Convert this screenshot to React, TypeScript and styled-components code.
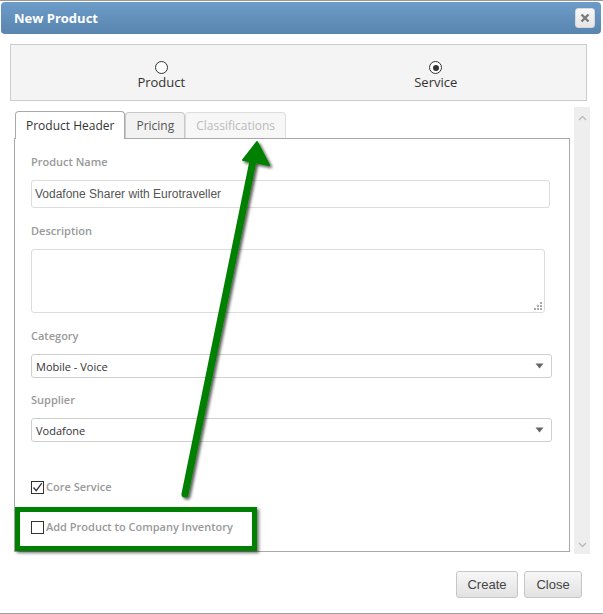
import React from 'react'
import styled, { createGlobalStyle } from 'styled-components'

const GlobalStyle = createGlobalStyle`
  html, body {
    margin: 0;
    padding: 0;
    background: #fff;
  }
  body {
    font-family: 'Open Sans', 'Liberation Sans', sans-serif;
  }
`

const Page = styled.div`
  position: relative;
  width: 603px;
  height: 614px;
  border-top: 1px solid #9a9a9a;
  box-sizing: border-box;
  overflow: hidden;
`

const Header = styled.div`
  margin: 1px 2px 0 1px;
  height: 32px;
  border-radius: 4px;
  background: linear-gradient(#6c9cc8, #5985b0);
  display: flex;
  align-items: center;
  justify-content: space-between;
  padding: 0 6px 0 13px;
`

const Title = styled.span`
  color: #fff;
  font-weight: 700;
  font-size: 13px;
`

const CloseX = styled.div`
  width: 18px;
  height: 18px;
  border: 1px solid #d8d8d8;
  border-radius: 3px;
  background: linear-gradient(#f8f8f8, #e6e6e6);
  display: flex;
  align-items: center;
  justify-content: center;
`

const RadioPanel = styled.div`
  margin: 10px 16px 0 10px;
  height: 55px;
  border: 1px solid #cccccc;
  background: #f4f4f4;
  padding: 0 13px;
  display: grid;
  grid-template-columns: 1fr 1fr;
`

const RadioOption = styled.div`
  display: flex;
  flex-direction: column;
  align-items: center;
  padding-top: 16px;
  font-size: 13px;
  color: #333;
  line-height: 16px;
`

const Radio = styled.span<{ $on?: boolean }>`
  width: 11px;
  height: 11px;
  border: 1px solid #333;
  border-radius: 50%;
  background: #fff;
  position: relative;
  &::after {
    content: '';
    display: ${(p) => (p.$on ? 'block' : 'none')};
    position: absolute;
    left: 2.5px;
    top: 2.5px;
    width: 6px;
    height: 6px;
    border-radius: 50%;
    background: #333;
  }
`

const ScrollArea = styled.div`
  margin: 6px 13px 0 14px;
  height: 447px;
  display: flex;
  gap: 4px;
`

const Content = styled.div`
  flex: 1;
  padding-top: 3px;
  display: flex;
  flex-direction: column;
`

const Scrollbar = styled.div`
  width: 16px;
  background: #eeeeee;
  display: flex;
  flex-direction: column;
  justify-content: space-between;
  align-items: center;
  padding: 8px 0 6px;
`

const Tabs = styled.div`
  display: flex;
  align-items: flex-end;
  height: 28px;
  padding-left: 1px;
`

const Tab = styled.div<{ $kind: 'active' | 'normal' | 'disabled' }>`
  height: ${(p) => (p.$kind === 'active' ? '28px' : '26px')};
  box-sizing: border-box;
  padding: 0 10px;
  display: flex;
  align-items: center;
  font-size: 12px;
  border: 1px solid ${(p) => (p.$kind === 'active' ? '#a8a8a8' : p.$kind === 'normal' ? '#c8c8c8' : '#dddddd')};
  border-bottom: none;
  border-radius: 4px 4px 0 0;
  background: ${(p) => (p.$kind === 'active' ? '#fff' : p.$kind === 'normal' ? '#f2f2f2' : '#f7f7f7')};
  color: ${(p) => (p.$kind === 'active' ? '#333' : p.$kind === 'normal' ? '#555' : '#bbbbbb')};
  margin-bottom: ${(p) => (p.$kind === 'active' ? '-1px' : '0')};
  position: relative;
  z-index: ${(p) => (p.$kind === 'active' ? 1 : 0)};
`

const Panel = styled.div`
  height: 414px;
  box-sizing: border-box;
  border: 1px solid #a8a8a8;
  padding: 15px 0 0 16px;
  display: flex;
  flex-direction: column;
  align-items: flex-start;
`

const Label = styled.div<{ $gap: number }>`
  margin-top: ${(p) => p.$gap}px;
  font-size: 11px;
  font-weight: 600;
  color: #999999;
  line-height: 16px;
`

const TextBox = styled.div`
  margin-top: 10px;
  width: 519px;
  height: 28px;
  box-sizing: border-box;
  border: 1px solid #dcdcdc;
  border-radius: 3px;
  padding-left: 3px;
  display: flex;
  align-items: center;
  font-family: 'Liberation Sans', Arial, sans-serif;
  font-size: 12px;
  color: #555;
`

const TextArea = styled.div`
  position: relative;
  margin-top: 10px;
  width: 514px;
  height: 64px;
  box-sizing: border-box;
  border: 1px solid #dcdcdc;
  border-radius: 3px;
`

const Grip = styled.svg`
  position: absolute;
  right: 2px;
  bottom: 2px;
`

const Select = styled.div`
  margin-top: 10px;
  width: 521px;
  height: 24px;
  box-sizing: border-box;
  border: 1px solid #cfcfcf;
  border-radius: 3px;
  padding: 0 7px 0 4px;
  display: flex;
  align-items: center;
  justify-content: space-between;
  font-size: 11px;
  color: #333;
`

const CheckRow = styled.div<{ $gap: number }>`
  margin-top: ${(p) => p.$gap}px;
  display: flex;
  align-items: center;
  gap: 2px;
  font-size: 11px;
  font-weight: 600;
  color: #999999;
  line-height: 16px;
`

const Box = styled.span`
  width: 13px;
  height: 13px;
  box-sizing: border-box;
  border: 1px solid #333;
  background: #fff;
  display: flex;
  align-items: center;
  justify-content: center;
`

const Footer = styled.div`
  display: flex;
  justify-content: flex-end;
  gap: 6px;
  padding: 17px 21px 0 0;
`

const Button = styled.button<{ $w: number }>`
  width: ${(p) => p.$w}px;
  height: 27px;
  border: 1px solid #c6c6c6;
  border-radius: 3px;
  background: linear-gradient(#f7f7f7, #e2e2e2);
  font-family: 'Liberation Sans', Arial, sans-serif;
  font-size: 13px;
  color: #444;
  padding: 0;
`

const BottomLine = styled.div`
  position: absolute;
  left: 0;
  right: 0;
  bottom: 0;
  height: 1px;
  background: #a0a0a0;
`

const Highlight = styled.div`
  position: absolute;
  left: 15px;
  top: 506px;
  width: 242px;
  height: 44px;
  box-sizing: border-box;
  border: 5px solid #008000;
  box-shadow: 2px 2px 3px rgba(0, 0, 0, 0.55);
`

const Annotation = styled.svg`
  position: absolute;
  left: 0;
  top: 0;
  pointer-events: none;
`

function Arrow() {
  return (
    <svg width="9" height="6" viewBox="0 0 9 6">
      <path d="M0.5 0.5 L8.5 0.5 L4.5 5.5 Z" fill="#666" />
    </svg>
  )
}

function Check() {
  return (
    <svg width="11" height="11" viewBox="0 0 11 11">
      <path d="M1.5 5.5 L4.2 8.6 L9.8 1.2" fill="none" stroke="#333" strokeWidth="1.3" />
    </svg>
  )
}

export default function App() {
  return (
    <Page>
      <GlobalStyle />
      <Header>
        <Title>New Product</Title>
        <CloseX>
          <svg width="10" height="10" viewBox="0 0 10 10">
            <path d="M1.5 1.5 L8.5 8.5 M8.5 1.5 L1.5 8.5" stroke="#7a7a7a" strokeWidth="2.4" />
          </svg>
        </CloseX>
      </Header>

      <RadioPanel>
        <RadioOption>
          <Radio />
          Product
        </RadioOption>
        <RadioOption>
          <Radio $on />
          Service
        </RadioOption>
      </RadioPanel>

      <ScrollArea>
        <Content>
          <Tabs>
            <Tab $kind="active">Product Header</Tab>
            <Tab $kind="normal">Pricing</Tab>
            <Tab $kind="disabled">Classifications</Tab>
          </Tabs>
          <Panel>
            <Label $gap={0}>Product Name</Label>
            <TextBox>Vodafone Sharer with Eurotraveller</TextBox>
            <Label $gap={15}>Description</Label>
            <TextArea>
              <Grip width="8" height="8" viewBox="0 0 8 8">
                <rect x="6" y="0" width="2" height="2" fill="#aaa" />
                <rect x="3" y="3" width="2" height="2" fill="#aaa" />
                <rect x="6" y="3" width="2" height="2" fill="#aaa" />
                <rect x="0" y="6" width="2" height="2" fill="#aaa" />
                <rect x="3" y="6" width="2" height="2" fill="#aaa" />
                <rect x="6" y="6" width="2" height="2" fill="#aaa" />
              </Grip>
            </TextArea>
            <Label $gap={15}>Category</Label>
            <Select>
              Mobile - Voice
              <Arrow />
            </Select>
            <Label $gap={14}>Supplier</Label>
            <Select>
              Vodafone
              <Arrow />
            </Select>
            <CheckRow $gap={37}>
              <Box>
                <Check />
              </Box>
              Core Service
            </CheckRow>
            <CheckRow $gap={24}>
              <Box />
              Add Product to Company Inventory
            </CheckRow>
          </Panel>
        </Content>
        <Scrollbar>
          <svg width="9" height="6" viewBox="0 0 9 6">
            <path d="M1 5 L4.5 1.5 L8 5" fill="none" stroke="#bbb" strokeWidth="1.4" />
          </svg>
          <svg width="9" height="6" viewBox="0 0 9 6">
            <path d="M1 1 L4.5 4.5 L8 1" fill="none" stroke="#bbb" strokeWidth="1.4" />
          </svg>
        </Scrollbar>
      </ScrollArea>

      <Footer>
        <Button $w={62}>Create</Button>
        <Button $w={58}>Close</Button>
      </Footer>

      <Highlight />
      <Annotation width="603" height="614" viewBox="0 0 603 614">
        <defs>
          <filter id="sh" x="-50%" y="-50%" width="200%" height="200%">
            <feDropShadow dx="2" dy="2" stdDeviation="1.5" floodColor="#000" floodOpacity="0.65" />
          </filter>
        </defs>
        <g filter="url(#sh)">
          <line x1="185" y1="493" x2="253" y2="160" stroke="#008000" strokeWidth="7" strokeLinecap="round" />
          <path d="M257 141 L269 164 L243 159 Z" fill="#008000" stroke="#008000" strokeWidth="2" strokeLinejoin="round" />
        </g>
      </Annotation>
      <BottomLine />
    </Page>
  )
}
